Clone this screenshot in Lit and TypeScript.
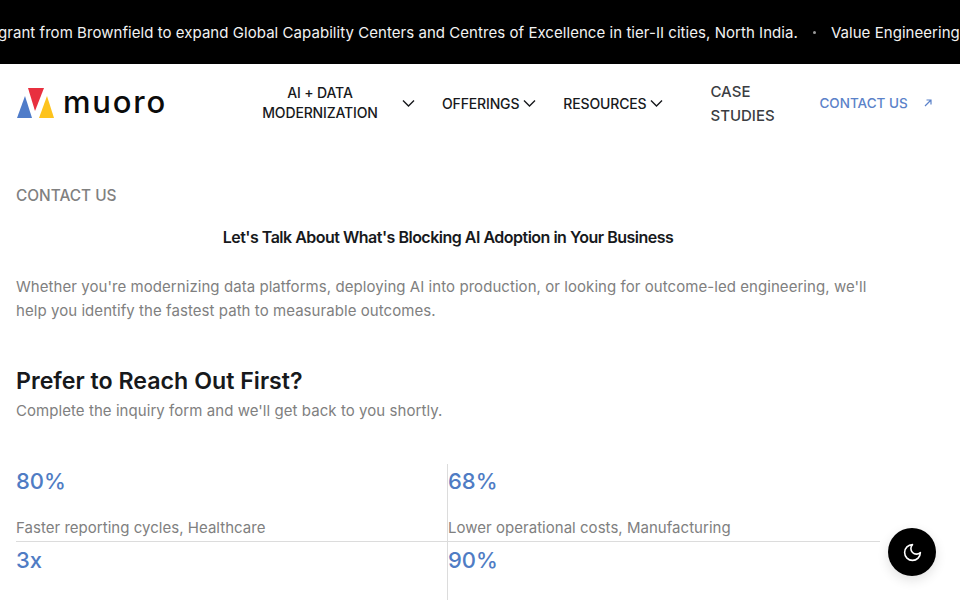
import { LitElement, html, css, svg } from 'lit';
import { customElement } from 'lit/decorators.js';

type Stat = { value: string; label: string };

const STATS: Stat[] = [
  { value: '80%', label: 'Faster reporting cycles, Healthcare' },
  { value: '68%', label: 'Lower operational costs, Manufacturing' },
  { value: '3x', label: '' },
  { value: '90%', label: '' },
];

const chevron = svg`<path d="M1 1.5l5.5 5.5L12 1.5" fill="none" stroke="currentColor" stroke-width="1.4"/>`;

@customElement('app-root')
class AppRoot extends LitElement {
  static styles = css`
    :host {
      display: block;
      height: 600px;
      overflow: hidden;
      position: relative;
      background: #fff;
      font-family: Inter, 'Noto Sans', sans-serif;
      color: #17191c;
    }

    .ticker {
      height: 64px;
      background: #000;
      color: #f2f2f2;
      font-size: 15px;
      letter-spacing: 0.05px;
      display: flex;
      align-items: center;
      white-space: nowrap;
      overflow: hidden;
    }

    /* marquee caught mid-scroll */
    .ticker__track {
      display: flex;
      align-items: center;
      flex: none;
      transform: translateX(-2px);
    }

    .ticker__dot {
      width: 3px;
      height: 3px;
      border-radius: 50%;
      background: #999;
      margin: 0 15px;
    }

    .header {
      height: 78px;
      display: flex;
      align-items: center;
      padding: 0 16px;
    }

    .logo {
      display: flex;
      align-items: center;
      gap: 9px;
      width: 244px;
      flex: none;
    }

    .logo__name {
      font-size: 31px;
      line-height: 30px;
      font-weight: 500;
      letter-spacing: 1.8px;
      color: #0b0b0b;
      margin-top: -2px;
    }

    .nav {
      display: flex;
      align-items: center;
      font-size: 14px;
      font-weight: 500;
      letter-spacing: -0.15px;
    }

    .nav__item {
      display: flex;
      align-items: center;
      gap: 4px;
      margin-right: 27px;
    }

    .nav__item svg {
      width: 13px;
      height: 8px;
      flex: none;
    }

    .nav__label--wrap {
      width: 120px;
      text-align: center;
      line-height: 20px;
      margin-right: 18px;
    }

    .nav__case {
      width: 80px;
      font-size: 15px;
      line-height: 24px;
      letter-spacing: 0;
      color: #3b3d42;
      margin-left: 20px;
      margin-right: 29px;
      padding-top: 2px;
    }

    .cta {
      display: flex;
      align-items: center;
      gap: 16px;
      color: #5b82c9;
      font-size: 13.5px;
      font-weight: 500;
    }

    .cta svg {
      width: 8px;
      height: 8px;
    }

    .main {
      padding: 42px 80px 0 16px;
    }

    .eyebrow {
      margin: 0;
      font-size: 15.4px;
      font-weight: 500;
      line-height: 24px;
      color: #808080;
    }

    .title {
      margin: 17px 0 0;
      font-size: 16px;
      line-height: 24px;
      font-weight: 600;
      text-align: center;
      letter-spacing: -0.5px;
    }

    .lead {
      margin: 26px 0 0;
      font-size: 15px;
      line-height: 24px;
      letter-spacing: 0.06px;
      color: #808080;
    }

    .subhead {
      margin: 43px 0 0;
      font-size: 23.2px;
      line-height: 30px;
      font-weight: 600;
    }

    .note {
      margin: 3px 0 0;
      font-size: 15px;
      line-height: 24px;
      letter-spacing: 0.06px;
      color: #808080;
    }

    .stats {
      display: grid;
      grid-template-columns: 1fr 1fr;
      margin-top: 41px;
    }

    .stat {
      height: 77px;
      border-bottom: 1px solid #dcdcdc;
    }

    .stat:nth-child(odd) {
      border-right: 1px solid #dcdcdc;
    }

    .stat:nth-child(n + 3) {
      border-bottom: none;
    }

    .stat__value {
      font-size: 22px;
      line-height: 36px;
      font-weight: 500;
      color: #4f7cc4;
      margin-top: -1px;
    }

    .stat:nth-child(n + 3) .stat__value {
      margin-top: 0;
    }

    .stat__label {
      margin-top: 17px;
      font-size: 15px;
      line-height: 24px;
      letter-spacing: 0.03px;
      color: #808080;
    }

    .theme {
      position: absolute;
      left: 888px;
      top: 528px;
      width: 48px;
      height: 48px;
      border: none;
      padding: 0;
      border-radius: 50%;
      background: #000;
      color: #fff;
      display: flex;
      align-items: center;
      justify-content: center;
      box-shadow: 0 4px 12px rgba(0, 0, 0, 0.12);
    }

    .theme svg {
      width: 21px;
      height: 21px;
    }
  `;

  render() {
    return html`
      <div class="ticker">
        <div class="ticker__track">
          <span>grant from Brownfield to expand Global Capability Centers and Centres of Excellence in tier-II cities, North India.</span>
          <span class="ticker__dot"></span>
          <span>Value Engineering</span>
        </div>
      </div>
      <header class="header">
        <div class="logo">
          <svg width="38" height="30" viewBox="0 0 38 30">
            <polygon points="1,30 9,8 16,30" fill="#4f7cc9" />
            <polygon points="12,0 28,0 19,23" fill="#e8303f" />
            <polygon points="23,30 31,8 38,30" fill="#fdc31d" />
          </svg>
          <span class="logo__name">muoro</span>
        </div>
        <nav class="nav">
          <div class="nav__item">
            <span class="nav__label--wrap">AI + DATA MODERNIZATION</span>
            <svg viewBox="0 0 13 8">${chevron}</svg>
          </div>
          <div class="nav__item">OFFERINGS <svg viewBox="0 0 13 8">${chevron}</svg></div>
          <div class="nav__item">RESOURCES <svg viewBox="0 0 13 8">${chevron}</svg></div>
          <div class="nav__item nav__case">CASE STUDIES</div>
        </nav>
        <div class="cta">
          CONTACT US
          <svg viewBox="0 0 8 8"><path d="M1 7l6-6M2.5 1H7v4.5" fill="none" stroke="currentColor" stroke-width="1.2" /></svg>
        </div>
      </header>
      <main class="main">
        <p class="eyebrow">CONTACT US</p>
        <h1 class="title">Let's Talk About What's Blocking AI Adoption in Your Business</h1>
        <p class="lead">
          Whether you're modernizing data platforms, deploying AI into production, or looking for outcome-led engineering, we'll
          help you identify the fastest path to measurable outcomes.
        </p>
        <h2 class="subhead">Prefer to Reach Out First?</h2>
        <p class="note">Complete the inquiry form and we'll get back to you shortly.</p>
        <div class="stats">
          ${STATS.map(
            (s) => html`
              <div class="stat">
                <div class="stat__value">${s.value}</div>
                ${s.label ? html`<div class="stat__label">${s.label}</div>` : ''}
              </div>
            `,
          )}
        </div>
      </main>
      <button class="theme" aria-label="Toggle theme">
        <svg viewBox="0 0 24 24"><path d="M12 3a6 6 0 0 0 9 9 9 9 0 1 1-9-9Z" fill="none" stroke="currentColor" stroke-width="1.8" stroke-linecap="round" stroke-linejoin="round" /></svg>
      </button>
    `;
  }
}
